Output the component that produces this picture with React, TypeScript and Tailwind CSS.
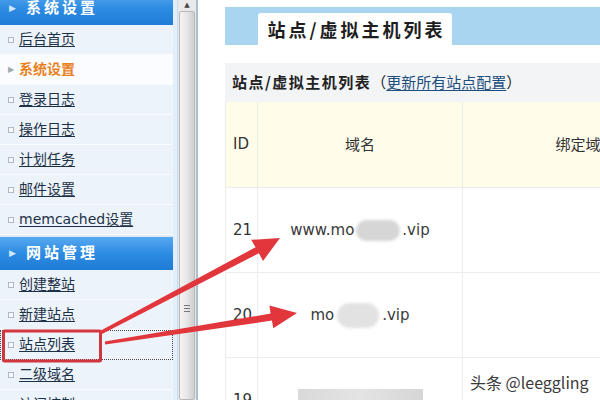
import clsx from "clsx";

const systemItems = [
  { label: "后台首页" },
  { label: "系统设置", active: true },
  { label: "登录日志" },
  { label: "操作日志" },
  { label: "计划任务" },
  { label: "邮件设置" },
  { label: "memcached设置" },
];

const siteItems = [
  { label: "创建整站" },
  { label: "新建站点" },
  { label: "站点列表", focused: true },
  { label: "二级域名" },
  { label: "访问控制" },
];

type NavItemProps = {
  label: string;
  active?: boolean;
  focused?: boolean;
};

function NavItem({ label, active, focused }: NavItemProps) {
  return (
    <div
      className={clsx(
        "flex h-[30px] shrink-0 items-center border-b border-[#f9fbfe] pl-[8px] text-[14px]",
        active ? "bg-[#fafcff]" : "bg-[#edf3fa]",
        focused && "outline-1 -outline-offset-1 outline-dotted outline-[#444]",
      )}
    >
      {active ? (
        <span className="mr-[5px] w-[6px] text-[8px] leading-none text-[#a0a8b0]">▶</span>
      ) : (
        <span className="mr-[5px] h-[6px] w-[6px] border border-[#b0b8c2] bg-[#f7f9fc]" />
      )}
      <span
        className={
          active
            ? "font-bold text-[#e8811c]"
            : "text-[#1c3148] underline underline-offset-2"
        }
      >
        {label}
      </span>
    </div>
  );
}

function NavHeader({ label, className }: { label: string; className?: string }) {
  return (
    <div
      className={clsx(
        "flex h-[33px] shrink-0 items-center bg-gradient-to-b from-[#56a9f0] via-[#2c8be2] to-[#1f7cd6] pl-[9px]",
        className,
      )}
    >
      <span className="mr-[10px] text-[9px] leading-none text-[#cfe6fb]">▶</span>
      <span className="text-[15px] font-bold tracking-[3px] text-white">{label}</span>
    </div>
  );
}

function Blur({ className }: { className: string }) {
  return <span className={clsx("inline-block rounded-full blur-[1.5px]", className)} />;
}

export default function App() {
  return (
    <div className="relative flex h-[400px] w-[600px] overflow-hidden bg-white font-['DejaVu_Sans','Noto_Sans_CJK_SC',sans-serif]">
      <aside className="flex w-[173px] shrink-0 flex-col bg-[#edf3fa]">
        <NavHeader label="系统设置" className="-mt-[8px]" />
        {systemItems.map((item) => (
          <NavItem key={item.label} {...item} />
        ))}
        <div className="h-[2px] shrink-0 bg-[#e3ecf6]" />
        <NavHeader label="网站管理" />
        {siteItems.map((item) => (
          <NavItem key={item.label} {...item} />
        ))}
      </aside>

      <div className="w-[5px] shrink-0 border-r border-[#c6dcef] bg-[#e2effa]" />

      <div className="flex w-[18px] shrink-0 flex-col bg-[#e9e9e9]">
        <div className="flex h-[11px] items-center justify-center text-[7px] leading-none text-[#444]">▲</div>
        <div className="mx-[1px] flex-1 rounded-[2px] border border-[#b8b8b8] bg-gradient-to-r from-[#f4f4f4] via-[#e6e6e6] to-[#cfcfcf]">
          <div className="mx-auto mt-[293px] flex w-[6px] flex-col gap-[2px]">
            <div className="h-px bg-[#777]" />
            <div className="h-px bg-[#777]" />
            <div className="h-px bg-[#777]" />
          </div>
        </div>
      </div>

      <div className="w-[2px] shrink-0 bg-[#a9bed3]" />

      <main className="min-w-0 flex-1 overflow-hidden pl-[27px] pt-[7px] text-[#333]">
        <div className="flex h-[38px] bg-[#a9d5f0]">
          <div className="ml-[33px] mt-[6px] flex h-[32px] w-[194px] items-center justify-center rounded-t-[3px] bg-white pl-[3px] font-['Noto_Sans_CJK_SC',sans-serif] text-[18px] font-bold tracking-[3px] text-[#1e1e1e]">
            站点/虚拟主机列表
          </div>
        </div>

        <div className="mt-[18px] flex h-[39px] items-center whitespace-nowrap bg-[#f3f4f6] pl-[7px] font-['Noto_Sans_CJK_SC',sans-serif] text-[15px] text-[#222]">
          <span className="font-bold tracking-[1.5px]">站点/虚拟主机列表</span>
          <span>（</span>
          <span className="text-[#1d4e7e] underline underline-offset-2">更新所有站点配置</span>
          <span>）</span>
        </div>

        <div className="grid w-[483px] grid-cols-[32px_205px_246px] text-[15px]">
          <div className="flex h-[85px] items-center border-l border-[#ececec] bg-[#fffcea] pl-[7px]">ID</div>
          <div className="flex h-[85px] items-center justify-center border-l border-[#ececec] bg-[#fffcea] font-['Noto_Sans_CJK_SC',sans-serif]">域名</div>
          <div className="flex h-[85px] items-center justify-center border-l border-[#ececec] bg-[#fffcea] font-['Noto_Sans_CJK_SC',sans-serif]">绑定域名</div>

          <div className="flex h-[85px] items-center border-l border-t border-[#ececec] pl-[7px]">21</div>
          <div className="flex h-[85px] items-center justify-center border-l border-t border-[#ececec] text-[#3a3a3a]">
            www.mo
            <Blur className="mx-[2px] h-[21px] w-[44px] bg-[#d6d6d6]" />
            .vip
          </div>
          <div className="h-[85px] border-l border-t border-[#ececec]" />

          <div className="flex h-[85px] items-center border-l border-t border-[#ececec] pl-[7px]">20</div>
          <div className="flex h-[85px] items-center justify-center border-l border-t border-[#ececec] text-[#3a3a3a]">
            mo
            <Blur className="mx-[3px] h-[25px] w-[42px] bg-[#e2e2e2]" />
            .vip
          </div>
          <div className="h-[85px] border-l border-t border-[#ececec]" />

          <div className="flex h-[85px] items-center border-l border-t border-[#ececec] pl-[7px]">19</div>
          <div className="flex h-[85px] justify-center border-l border-t border-[#ececec] pt-[31px]">
            <div className="h-[40px] w-[125px] bg-gradient-to-r from-[#d9d9d9] via-[#e4e4e4] to-[#d6d6d6]" />
          </div>
          <div className="h-[85px] border-l border-t border-[#ececec]" />
        </div>
      </main>

      <svg className="pointer-events-none absolute inset-0" width="600" height="400" viewBox="0 0 600 400">
        <rect x="3.5" y="331" width="97" height="30" fill="none" stroke="#d2363d" strokeWidth="3" rx="1" />
        <polygon
          fill="#e2363d"
          points="99,331.5 255.6,247.2 251.2,239.8 280,238 263,261 258.9,253.2 101,334.5"
        />
        <polygon
          fill="#e2363d"
          points="104.8,341.5 270.6,313.6 269.4,305.6 297,313 273.3,328.2 271.9,320.6 105.2,344.5"
        />
      </svg>

      <div className="pointer-events-none absolute left-[470px] top-[370px] font-['Noto_Sans_CJK_SC',sans-serif] text-[16px] text-[#3b3b3b] [text-shadow:0_0_2px_#fff]">
        头条 @leeggling
      </div>
    </div>
  );
}
